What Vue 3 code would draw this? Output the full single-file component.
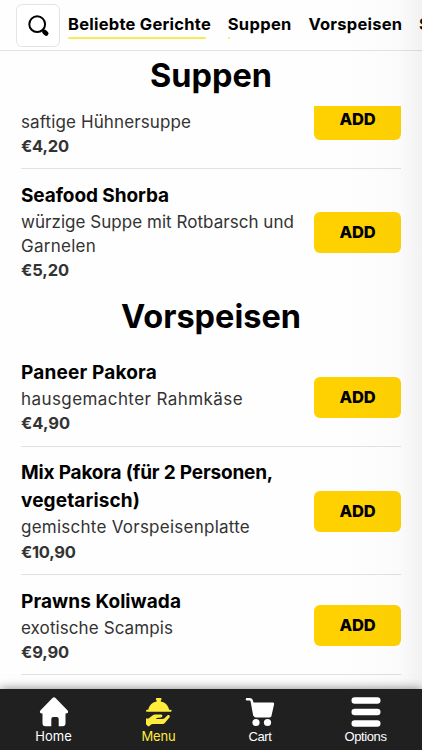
<script setup>
const tabs = [
  { name: 'Beliebte Gerichte', width: 143, state: 'full' },
  { name: 'Suppen', width: 64, state: 'start' },
  { name: 'Vorspeisen', width: 94, state: '' },
  { name: 'Salate', width: 52, state: '' }
]

const soups = [
  { title: [['Mulligatawny', 134]], text: [['saftige Hühnersuppe', 170]], price: ['€4,20', 48] },
  {
    title: [['Seafood Shorba', 148]],
    text: [['würzige Suppe mit Rotbarsch und', 273], ['Garnelen', 75]],
    price: ['€5,20', 48]
  }
]

const starters = [
  { title: [['Paneer Pakora', 136]], text: [['hausgemachter Rahmkäse', 222]], price: ['€4,90', 49] },
  {
    title: [['Mix Pakora (für 2 Personen,', 252], ['vegetarisch)', 119]],
    text: [['gemischte Vorspeisenplatte', 229]],
    price: ['€10,90', 54.5]
  },
  { title: [['Prawns Koliwada', 160]], text: [['exotische Scampis', 152]], price: ['€9,90', 48] }
]

const sections = [
  { name: '', items: soups },
  { name: 'Vorspeisen', items: starters }
]

// Spreads the tracking of a line so that it fills the given width.
const vFit = {
  mounted(el, { value }) {
    const natural = el.getBoundingClientRect().width
    el.style.letterSpacing = `${(value - natural) / el.textContent.length}px`
  }
}
</script>

<template>
  <div class="app">
    <header class="topbar">
      <button class="search" aria-label="Search">
        <svg width="24" height="24" viewBox="0 0 24 24">
          <circle cx="10.2" cy="10.2" r="7.9" fill="none" stroke="#000" stroke-width="2" />
          <path d="M15.7 16.2l1.3 1.2" stroke="#000" stroke-width="2.4" />
          <path d="M17.5 18l1.7 1.5" stroke="#000" stroke-width="4.6" stroke-linecap="round" />
        </svg>
      </button>
      <nav class="tabs">
        <a v-for="tab in tabs" :key="tab.name" class="tab" :class="tab.state">
          <span v-fit="tab.width" class="line">{{ tab.name }}</span>
        </a>
      </nav>
    </header>

    <h2 class="heading pinned"><span v-fit="122" class="line">Suppen</span></h2>

    <main class="content">
      <section v-for="section in sections" :key="section.name" class="section">
        <h2 v-if="section.name" class="heading"><span v-fit="180" class="line">{{ section.name }}</span></h2>
        <article v-for="item in section.items" :key="item.title[0][0]" class="item">
          <div class="info">
            <h3 class="title">
              <div v-for="[line, width] in item.title" :key="line"><span v-fit="width" class="line">{{ line }}</span></div>
            </h3>
            <div class="text">
              <div v-for="[line, width] in item.text" :key="line"><span v-fit="width" class="line">{{ line }}</span></div>
            </div>
            <div class="price"><span v-fit="item.price[1]" class="line">{{ item.price[0] }}</span></div>
          </div>
          <button class="add"><span v-fit="36" class="line">ADD</span></button>
        </article>
      </section>
    </main>

    <footer class="bottombar">
      <a class="link">
        <svg width="30" height="30" viewBox="0 0 30 30" fill="currentColor">
          <path d="M13.5 1.1a2.1 2.1 0 0 1 3 0L28.4 13.2c1.4 1.4.6 3.2-1.2 3.2h-.7v9.800a3 3 0 0 1-3 3h-3.8V22a2 2 0 0 0-2-2h-3.4a2 2 0 0 0-2 2v7.200H6.5a3 3 0 0 1-3-3V16.4h-.7c-1.8 0-2.6-1.8-1.2-3.2z" />
        </svg>
        <span v-fit="36.5" class="line">Home</span>
      </a>
      <a class="link active">
        <svg width="30" height="30" viewBox="0 0 30 30" fill="currentColor">
          <path d="M4.200 13.500C4.600 8.900 8 5.100 12.600 4.400V3.300a1.300 1.300 0 0 1 0-2.400h4.200a1.300 1.300 0 0 1 0 2.400v1.100c4.600.7 8 4.500 8.400 9.100z" />
          <rect x="2" y="12.700" width="25.600" height="2" rx="1" />
          <path d="M2 21.500h2.600l3.900-3.100c.8-.6 1.700-.9 2.700-.9h5.600c2 0 2.200 2.600.2 2.900l-4.300.6c-.8.1-.7 1 .1 1h5.300c1.100 0 1.900-.4 2.700-1.100l2.500-2.300c1.500-1.300 3.300.2 2.300 1.700l-4.400 5.200c-.8 1-1.900 1.500-3.200 1.500H9c-1 0-1.800.3-2.500.9l-1.300 1.300H4L2 27.200z" />
        </svg>
        <span v-fit="34" class="line">Menu</span>
      </a>
      <a class="link plain cart">
        <svg width="30" height="30" viewBox="0 0 30 30" fill="currentColor">
          <path d="M2 2.300h2.900c1 0 1.700.6 1.900 1.600l2.600 14" fill="none" stroke="currentColor" stroke-width="2.600" stroke-linecap="round" />
          <path d="M6.800 5.500h20.900c1 0 1.600.8 1.400 1.700l-2.600 11.500c-.2 1-1 1.700-2 1.700H10.700c-1 0-1.700-.7-1.900-1.700z" />
          <circle cx="11" cy="25.500" r="3.600" />
          <circle cx="22.500" cy="25.500" r="3.600" />
        </svg>
        <span v-fit="23" class="line">Cart</span>
      </a>
      <a class="link plain">
        <svg width="30" height="30" viewBox="0 0 30 30" fill="currentColor">
          <rect x=".5" y=".3" width="29" height="6.400" rx="3.200" />
          <rect x=".5" y="11.800" width="29" height="6.400" rx="3.200" />
          <rect x=".5" y="23.300" width="29" height="6.400" rx="3.200" />
        </svg>
        <span v-fit="42" class="line">Options</span>
      </a>
    </footer>
    <div class="shade"></div>
  </div>
</template>

<style>
body {
  background: #fefefe;
}
</style>

<style scoped>
.app {
  position: relative;
  display: flex;
  flex-direction: column;
  width: 422px;
  height: 750px;
  overflow: hidden;
  background: #fefefe;
  color: #000;
  font-family: Inter, "Liberation Sans", sans-serif;
}
.line {
  display: inline-block;
  white-space: nowrap;
}
.topbar {
  box-sizing: border-box;
  flex: none;
  display: flex;
  align-items: flex-start;
  gap: 8px;
  height: 51px;
  padding: 4px 0 0 16px;
  border-bottom: 1px solid #e2e2e2;
}
.search {
  box-sizing: border-box;
  flex: none;
  display: grid;
  place-items: center;
  width: 44px;
  height: 43px;
  padding: 0 0 0 2px;
  border: 1px solid #e4e4e4;
  border-radius: 6px;
  background: #fff;
}
.tabs {
  display: flex;
  gap: 16.700px;
  padding-top: 8px;
}
.tab {
  font-size: 16.500px;
  font-weight: 750;
  line-height: 25px;
}
.tab::after {
  content: "";
  display: block;
  width: 0;
  height: 2px;
  border-radius: 1px;
  background: #f7ea55;
}
.tab.full::after {
  width: 138px;
}
.tab.start::after {
  width: 2px;
}
.heading {
  flex: none;
  height: 52.500px;
  margin: 0;
  font-size: 32.500px;
  font-weight: 750;
  line-height: 46px;
  text-align: center;
}
.heading.pinned {
  height: 55px;
  line-height: 49px;
}
.content {
  flex: 1;
  min-height: 0;
  padding: 0 21px;
  overflow: hidden;
}
.section:first-child {
  margin-top: -37px;
}
.item {
  display: flex;
  align-items: center;
  justify-content: space-between;
  padding: 12.600px 0 10.100px;
  border-bottom: 1px solid #e2e2e2;
}
.section:first-child .item:last-child {
  border-bottom-color: transparent;
}
.title {
  margin: 0;
  font-size: 19px;
  font-weight: 650;
  line-height: 28px;
}
.text,
.price {
  color: #333;
  font-size: 17px;
  line-height: 24.300px;
}
.price {
  font-size: 16.500px;
  font-weight: 700;
}
.add {
  flex: none;
  width: 87px;
  height: 41px;
  padding: 0;
  border: 0;
  border-radius: 6px;
  background: #ffd100;
  color: #000;
  font: 800 16.500px/41px Inter, sans-serif;
}
.bottombar {
  box-sizing: border-box;
  position: relative;
  flex: none;
  display: grid;
  grid-template-columns: repeat(4, 104px);
  justify-content: start;
  height: 61px;
  padding: 8px 0 0 1.500px;
  background: #202020;
  box-shadow: 0 0 10px rgba(0, 0, 0, 0.5);
}
.link {
  display: flex;
  flex-direction: column;
  align-items: center;
  color: #fff;
  font-size: 13px;
  line-height: 19px;
}
.link.active {
  padding-left: 2px;
  color: #ffeb3b;
}
.link.plain {
  font-family: "Liberation Sans", sans-serif;
}
.link.cart {
  padding-right: 3px;
}
.shade {
  position: absolute;
  top: 0;
  right: 0;
  bottom: 61px;
  width: 80px;
  background: linear-gradient(to right, rgba(120, 120, 120, 0), rgba(120, 120, 120, 0.025) 70%, rgba(120, 120, 120, 0.09));
  pointer-events: none;
}
</style>
